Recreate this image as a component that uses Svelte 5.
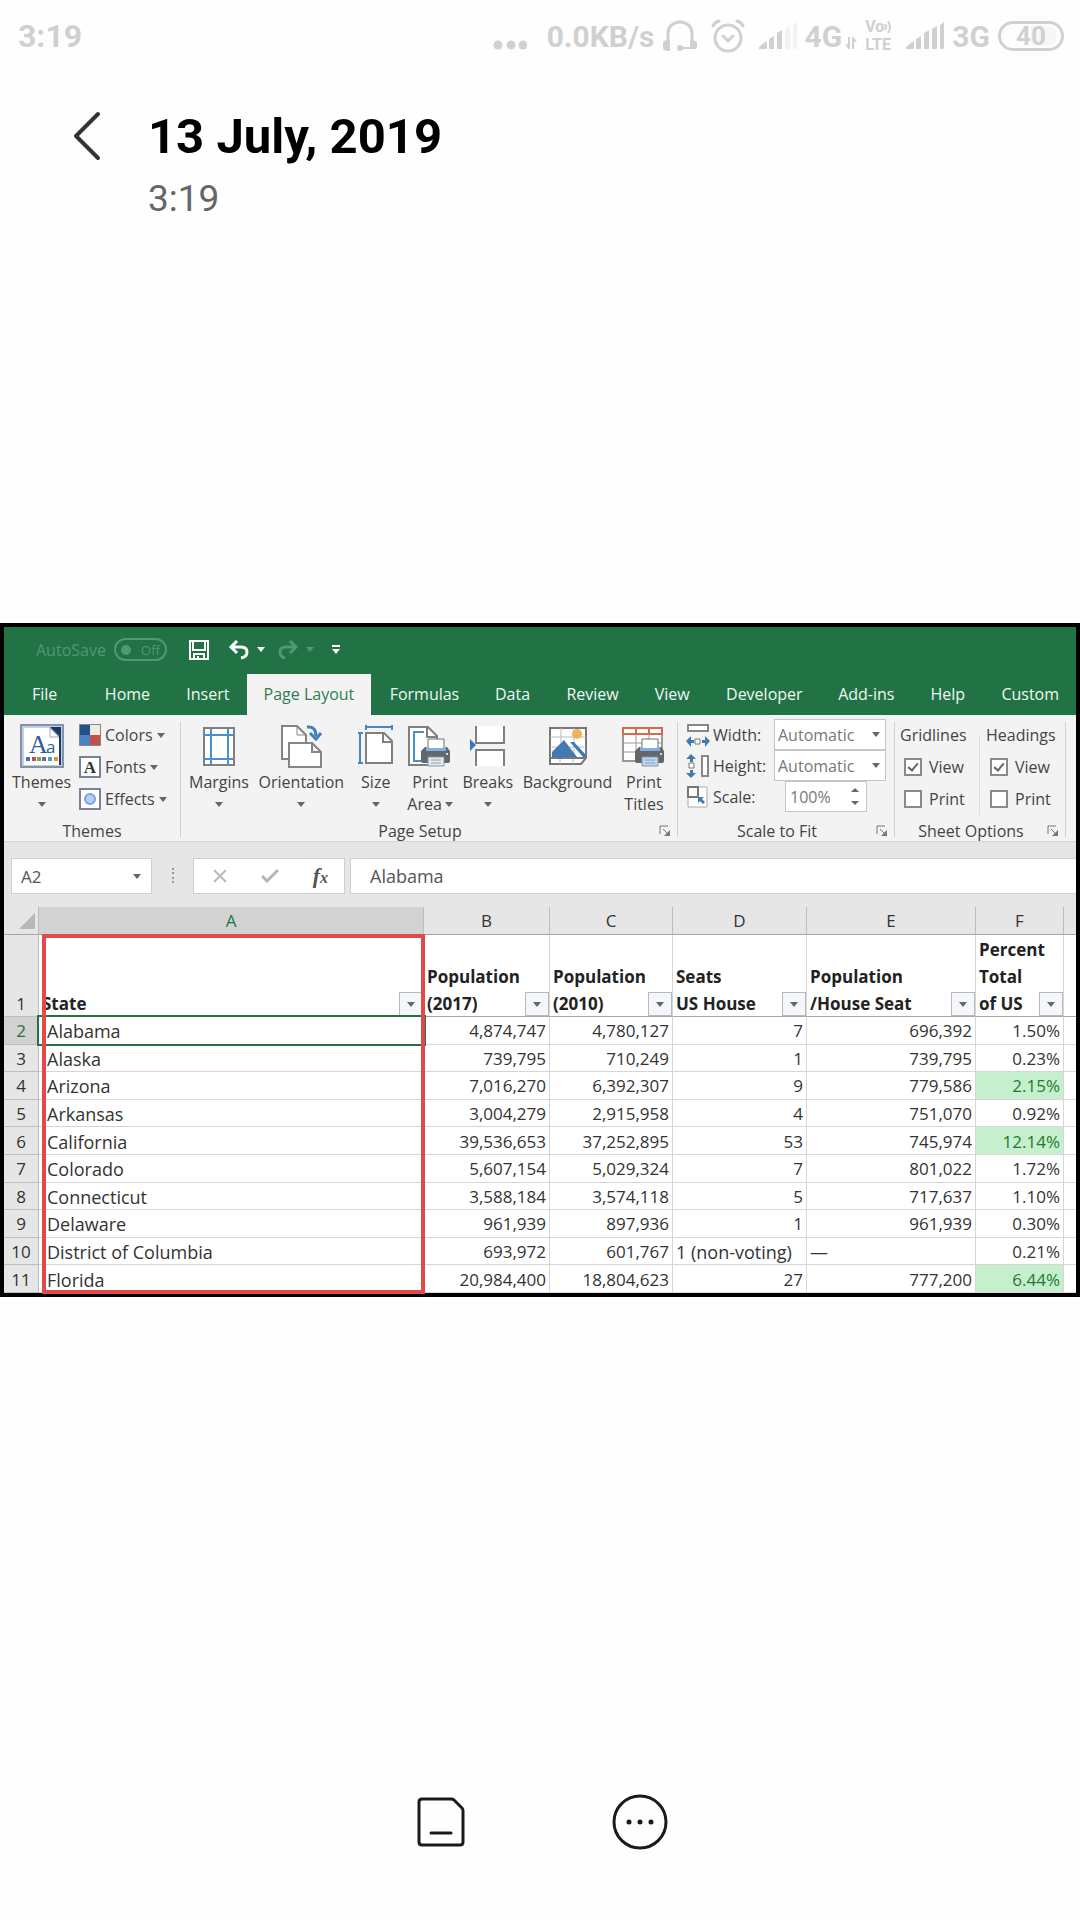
<script lang="ts">
    const tabs = [
        "File", "Home", "Insert", "Page Layout", "Formulas", "Data",
        "Review", "View", "Developer", "Add-ins", "Help", "Custom",
    ];
    let activeTab = $state("Page Layout");

    /* page setup tools, an empty second line shows only the caret */
    const tools = [
        { icon: "margins", label: "Margins", second: "", caret: true },
        { icon: "orientation", label: "Orientation", second: "", caret: true },
        { icon: "size", label: "Size", second: "", caret: true },
        { icon: "area", label: "Print", second: "Area", caret: true },
        { icon: "breaks", label: "Breaks", second: "", caret: true },
        { icon: "background", label: "Background", second: "", caret: false },
        { icon: "titles", label: "Print", second: "Titles", caret: false },
    ];

    const options = [
        { name: "Gridlines", view: true, print: false },
        { name: "Headings", view: true, print: false },
    ];

    const letters = ["A", "B", "C", "D", "E", "F"];
    const headings = [
        ["State"],
        ["Population", "(2017)"],
        ["Population", "(2010)"],
        ["Seats", "US House"],
        ["Population", "/House Seat"],
        ["Percent", "Total", "of US"],
    ];
    const rows = [
        ["Alabama", "4,874,747", "4,780,127", "7", "696,392", "1.50%"],
        ["Alaska", "739,795", "710,249", "1", "739,795", "0.23%"],
        ["Arizona", "7,016,270", "6,392,307", "9", "779,586", "2.15%"],
        ["Arkansas", "3,004,279", "2,915,958", "4", "751,070", "0.92%"],
        ["California", "39,536,653", "37,252,895", "53", "745,974", "12.14%"],
        ["Colorado", "5,607,154", "5,029,324", "7", "801,022", "1.72%"],
        ["Connecticut", "3,588,184", "3,574,118", "5", "717,637", "1.10%"],
        ["Delaware", "961,939", "897,936", "1", "961,939", "0.30%"],
        ["District of Columbia", "693,972", "601,767", "1 (non-voting)", "—", "0.21%"],
        ["Florida", "20,984,400", "18,804,623", "27", "777,200", "6.44%"],
    ];

    /* conditional formatting: anything above 2% is green */
    const isHigh = (value: string) => value.endsWith("%") && parseFloat(value) > 2;
    const isNumber = (value: string) => /^[\d.,]+%?$/.test(value);
</script>

{#snippet caret()}
    <svg class="caret" width="8" height="5" viewBox="0 0 8 5" aria-hidden="true">
        <path d="M0 0h8L4 5z" fill="currentColor" />
    </svg>
{/snippet}

{#snippet signal(full: number)}
    <svg width="39" height="28" viewBox="0 0 39 28" fill="currentColor" aria-hidden="true">
        <path d="M1 27a1 1 0 0 1-1-2l6-5q2-1 2 1v5q0 1-1 1z" />
        <path d="M10 17l5-3v12q0 1-1 1h-3q-1 0-1-1z" />
        <path d="M18 11l5-3v18q0 1-1 1h-3q-1 0-1-1z" />
        <path d="M26 7l5-3v22q0 1-1 1h-3q-1 0-1-1z" opacity={full > 3 ? 1 : 0.25} />
        <path d="M34 3l4-3v26q0 1-1 1h-2q-1 0-1-1z" opacity={full > 3 ? 1 : 0.25} />
    </svg>
{/snippet}

{#snippet printer(tray: string)}
    <g transform="translate(13 15)">
        <path d="M7 0h16v11H7z" fill="#fff" stroke="#707070" />
        <path d="M4 8h22l3 4v10q0 2-2 2H2q-2 0-2-2V12z" fill="#62676d" />
        <path d="M5 8h20v4H5z" fill="#7fb0e0" />
        <path d="M8 2h14v7H8z" fill="#fff" />
        <circle cx="26" cy="15" r="1" fill="#fff" />
        <path d="M7 18h16v9H7z" fill={tray} stroke="#8f9499" />
        <path d="M10 21h10M10 24h10" stroke="#8aa4bd" />
    </g>
{/snippet}

{#snippet launcher(name: string)}
    <button class="launcher" aria-label={name}>
        <svg width="12" height="12" viewBox="0 0 12 12" fill="none" stroke="#777">
            <path d="M1 9V1h8M4 4l5 5" />
            <path d="M11 5v6H5z" fill="#777" stroke="none" />
        </svg>
    </button>
{/snippet}

{#snippet toolIcon(name: string)}
    <svg width="44" height="44" viewBox="0 0 44 44" fill="none" aria-hidden="true">
        {#if name === "margins"}
            <path d="M7 4h30v37H7z" fill="#fff" stroke="#808080" stroke-width="2" />
            <path d="M14 4v37M31 4v37M7 11h30M7 35h30" stroke="#4a90cf" stroke-width="2" />
        {:else if name === "orientation"}
            <path d="M3 2h15l9 9v24H3z" fill="#fff" stroke="#858585" stroke-width="2" />
            <path d="M18 2v9h9" stroke="#858585" />
            <path d="M10 19h23l9 9v15H10z" fill="#fff" stroke="#858585" stroke-width="2" />
            <path d="M33 19v9h9" stroke="#858585" stroke-width="2" />
            <path d="M28 3q9-1 9 9" stroke="#3f7fbf" stroke-width="3" />
            <path d="M31 9l6 6 5-6" stroke="#3f7fbf" stroke-width="3" />
        {:else if name === "size"}
            <path d="M12 9h18l8 8v22H12z" fill="#fff" stroke="#808080" stroke-width="2" />
            <path d="M29 9v9h9" stroke="#808080" stroke-width="2" />
            <path d="M12 3h26M12 1v5M38 1v5M6 9v30M4 9h5M4 39h5" stroke="#4a86c0" stroke-width="2" />
        {:else if name === "area"}
            <path d="M1 3h19l9 9v29H1z" fill="#fff" stroke="#808080" stroke-width="2" />
            <path d="M19 3v10h10" stroke="#808080" stroke-width="2" />
            <path d="M16 8H6v29h9" stroke="#4a90cf" stroke-width="2" />
            {@render printer("#e5e9ee")}
        {:else if name === "breaks"}
            <path d="M10 2h28v17H10zM10 25h28v17H10z" fill="#fff" />
            <path d="M10 2v17h28V2M10 42V26h28v16" stroke="#808080" stroke-width="2" />
            <path d="M4 15l6 6-6 6z" fill="#3a78b8" />
        {:else if name === "background"}
            <path d="M4 4h36v30l-5 6H4z" fill="#fff" stroke="#777" stroke-width="2" />
            <path d="M15 4v28M28 4v28M4 13h36M4 23h36M14 35v5M27 35v5" stroke="#bbb" />
            <path d="M6 33V28l12-12 13 17z" fill="#3f7ab5" />
            <path d="M24 18h4l11 12v3h-2z" fill="#3f7ab5" />
            <circle cx="31" cy="10" r="5" fill="#edb35b" />
            <path d="M4 34h36" stroke="#777" stroke-width="2" />
        {:else}
            <path d="M1 4h39v33H1z" fill="#fff" stroke="#999" stroke-width="2" />
            <path d="M14 10v27M27 10v27M1 19h39M1 28h39" stroke="#999" />
            <path d="M1 4h39v6H1zM14 4v6M27 4v6" fill="#fff" stroke="#d9694d" stroke-width="2" />
            {@render printer("#b9d8f5")}
        {/if}
    </svg>
{/snippet}

<div class="page">
    <header>
        <div class="status">
            <span class="clock">3:19</span>
            <svg width="34" height="10" viewBox="0 0 34 10" fill="currentColor" class="dots" aria-hidden="true">
                <circle cx="5" cy="5" r="4.5" /><circle cx="18" cy="5" r="4.5" /><circle cx="30" cy="5" r="4.5" />
            </svg>
            <span class="speed">0.0KB/s</span>
            <svg class="phones" width="34" height="32" viewBox="0 0 34 32" fill="none" stroke="currentColor" stroke-width="3" aria-hidden="true">
                <path d="M5 22V13a12 11 0 0 1 24 0v9" />
                <path d="M0 23q0-2 4-3h3v11H4q-4-1-4-3zM34 23q0-2-4-3h-3v9h3q4 0 4-2z" fill="currentColor" stroke="none" />
                <path d="M17 28h13" stroke-width="2" />
                <circle cx="17" cy="28" r="3" fill="currentColor" stroke="none" />
            </svg>
            <svg class="alarm" width="34" height="34" viewBox="0 0 34 34" fill="none" stroke="currentColor" stroke-width="3" stroke-linecap="round" aria-hidden="true">
                <circle cx="17" cy="19" r="13" />
                <path d="M2 7q2-4 6-5M32 7q-2-4-6-5M12 17l5 5 5-5" />
            </svg>
            {@render signal(3)}
            <span class="net">4G</span>
            <svg class="arrows" width="12" height="12" viewBox="0 0 12 12" fill="none" stroke="currentColor" stroke-width="2" aria-hidden="true">
                <path d="M4 0v11L1 7M8 12V1l3 4" />
            </svg>
            <span class="volte">
                <span>Vo<svg width="8" height="12" viewBox="0 0 8 12" fill="none" stroke="currentColor" stroke-width="2" aria-hidden="true"><path d="M1 3q2 3 0 6M4 0q4 6 0 12" /></svg></span>
                <span>LTE</span>
            </span>
            {@render signal(5)}
            <span class="net">3G</span>
            <span class="battery"><span>40</span></span>
        </div>
        <div class="title">
            <button class="back" aria-label="Back">
                <svg width="30" height="50" viewBox="0 0 30 50" fill="none" stroke="#333" stroke-width="4" stroke-linecap="round" stroke-linejoin="round">
                    <path d="M25 3L3 25l22 22" />
                </svg>
            </button>
            <div>
                <h1>13 July, 2019</h1>
                <time>3:19</time>
            </div>
        </div>
    </header>

    <main>
        <div class="quick">
            <span class="autosave">AutoSave</span>
            <button class="toggle" aria-label="AutoSave off"><i></i>Off</button>
            <button class="save" aria-label="Save">
                <svg width="20" height="20" viewBox="0 0 20 20" fill="none" stroke="#fff" stroke-width="2">
                    <path d="M1 1h18v18H1zM4 1v9h12V1M5 19v-5h10v5M9 16v3" />
                </svg>
            </button>
            <button class="undo" aria-label="Undo">
                <svg width="22" height="20" viewBox="0 0 22 20" fill="none" stroke="#fff" stroke-width="3">
                    <path d="M9 1L3 7l6 6M3 7h10q6 0 6 5t-6 6" />
                </svg>
                {@render caret()}
            </button>
            <button class="redo" aria-label="Redo">
                <svg width="22" height="20" viewBox="0 0 22 20" fill="none" stroke="currentColor" stroke-width="3">
                    <path d="M13 1l6 6-6 6M19 7H9q-6 0-6 5t5 6" />
                </svg>
                {@render caret()}
            </button>
            <button aria-label="Customize toolbar">
                <svg width="8" height="10" viewBox="0 0 8 10" fill="#fff"><path d="M0 0h8v2H0zM0 4h8L4 9z" /></svg>
            </button>
        </div>

        <nav>
            {#each tabs as tab}
                <button class:active={tab === activeTab} onclick={() => (activeTab = tab)}>{tab}</button>
            {/each}
        </nav>

        <div class="ribbon">
            <section class="themes">
                <div class="body">
                    <button class="tool">
                        <svg width="44" height="44" viewBox="0 0 44 44" aria-hidden="true">
                            <path d="M1 1h42v42H1z" fill="#c3d0e2" stroke="#8593a8" stroke-width="2" />
                            <path d="M4 4h27l10 10v27H4z" fill="#fff" />
                            <path d="M30 3h11v38h-2V12z" fill="#1d3768" />
                            <path d="M30 4l9 9h-9z" fill="#fff" stroke="#9aa8bd" />
                            <text x="9" y="29" font-family="Liberation Serif, serif" font-size="26" fill="#2c5f94">A</text>
                            <text x="26" y="29" font-family="Open Sans, sans-serif" font-size="17" fill="#2c5f94">a</text>
                            <path d="M6 33h4v4H6z" fill="#4472c4" /><path d="M12 33h4v4h-4z" fill="#c0504d" />
                            <path d="M17 33h4v4h-4z" fill="#76a646" /><path d="M22 33h4v4h-4z" fill="#7e5fa6" />
                            <path d="M28 33h4v4h-4z" fill="#45a5c4" /><path d="M34 33h4v4h-4z" fill="#e88d3c" />
                        </svg>
                        <span>Themes</span>
                        <span>{@render caret()}</span>
                    </button>
                    <div class="stack">
                        <button>
                            <svg width="22" height="22" viewBox="0 0 22 22" aria-hidden="true">
                                <path d="M0 0h22v22H0z" fill="#888" /><path d="M1 1h10v10H1z" fill="#24508a" />
                                <path d="M11 1h10v10H11z" fill="#eeece1" /><path d="M1 11h10v10H1z" fill="#4a82c4" />
                                <path d="M11 11h10v10H11z" fill="#c0504d" />
                            </svg>
                            Colors{@render caret()}
                        </button>
                        <button>
                            <svg width="22" height="22" viewBox="0 0 22 22" aria-hidden="true">
                                <path d="M1 1h20v20H1z" fill="#fff" stroke="#77839a" stroke-width="2" />
                                <text x="11" y="17" text-anchor="middle" font-family="Liberation Serif, serif" font-weight="700" font-size="17" fill="#333">A</text>
                            </svg>
                            Fonts{@render caret()}
                        </button>
                        <button>
                            <svg width="22" height="22" viewBox="0 0 22 22" aria-hidden="true">
                                <path d="M1 1h20v20H1z" fill="#fff" stroke="#77839a" stroke-width="2" />
                                <circle cx="11" cy="11" r="5" fill="#b5d0f3" stroke="#7da3dc" stroke-width="2" />
                            </svg>
                            Effects{@render caret()}
                        </button>
                    </div>
                </div>
                <div class="caption"><span>Themes</span></div>
            </section>

            <section class="setup">
                <div class="body">
                    {#each tools as tool}
                        <button class="tool">
                            {@render toolIcon(tool.icon)}
                            <span>{tool.label}</span>
                            <span>{tool.second}{#if tool.caret}{@render caret()}{/if}</span>
                        </button>
                    {/each}
                </div>
                <div class="caption"><span>Page Setup</span>{@render launcher("Page Setup settings")}</div>
            </section>

            <section class="scale">
                <div class="fit">
                    <svg width="24" height="24" viewBox="0 0 24 24" fill="none" aria-hidden="true">
                        <path d="M2 2h20v6H2z" fill="#fff" stroke="#888" stroke-width="2" />
                        <path d="M9 16h5v5H9z" fill="#fff" stroke="#777" />
                        <path d="M0 18l5-5v4h3v3H5v4zM24 18l-5-5v4h-3v3h3v4z" fill="#3f7ab5" />
                    </svg>
                    <label for="fit-width">Width:</label>
                    <div class="select">
                        <select id="fit-width"><option>Automatic</option></select>
                        {@render caret()}
                    </div>
                    <svg width="24" height="24" viewBox="0 0 24 24" fill="none" aria-hidden="true">
                        <path d="M16 2h6v20h-6z" fill="#fff" stroke="#888" stroke-width="2" />
                        <path d="M3 9h5v5H3z" fill="#fff" stroke="#777" />
                        <path d="M5 0l5 5H7v3H4V5H0zM5 24l5-5H7v-3H4v3H0z" fill="#3f7ab5" />
                    </svg>
                    <label for="fit-height">Height:</label>
                    <div class="select">
                        <select id="fit-height"><option>Automatic</option></select>
                        {@render caret()}
                    </div>
                    <svg width="24" height="24" viewBox="0 0 24 24" fill="none" aria-hidden="true">
                        <path d="M2 2h19v20H2z" fill="#fff" stroke="#aaa" />
                        <path d="M2 2h10v10H2z" fill="#fff" stroke="#777" stroke-width="2" />
                        <path d="M12 12h6l-2 2 3 3-2 2-3-3-2 2z" fill="#3f7ab5" />
                    </svg>
                    <label for="fit-scale">Scale:</label>
                    <div class="spin">
                        <input id="fit-scale" type="text" value="100%" />
                        <span>
                            <button aria-label="Increase scale"><svg width="8" height="4" viewBox="0 0 8 4"><path d="M0 4h8L4 0z" fill="#666" /></svg></button>
                            <button aria-label="Decrease scale"><svg width="8" height="4" viewBox="0 0 8 4"><path d="M0 0h8L4 4z" fill="#666" /></svg></button>
                        </span>
                    </div>
                </div>
                <div class="caption"><span>Scale to Fit</span>{@render launcher("Scale settings")}</div>
            </section>

            <section class="options">
                <div class="body">
                    {#each options as option}
                        <fieldset>
                            <legend>{option.name}</legend>
                            <label><input type="checkbox" checked={option.view} />View</label>
                            <label><input type="checkbox" checked={option.print} />Print</label>
                        </fieldset>
                    {/each}
                </div>
                <div class="caption"><span>Sheet Options</span>{@render launcher("Sheet settings")}</div>
            </section>
        </div>

        <div class="formula">
            <div class="namebox">
                <input type="text" value="A2" aria-label="Name box" />
                {@render caret()}
            </div>
            <svg class="grip" width="4" height="16" viewBox="0 0 4 16" fill="#999" aria-hidden="true">
                <path d="M1 0h2v2H1zM1 4h2v2H1zM1 9h2v2H1zM1 13h2v2H1z" />
            </svg>
            <div class="actions">
                <button aria-label="Cancel"><svg width="16" height="16" viewBox="0 0 16 16" fill="none" stroke="#bbb" stroke-width="2"><path d="M2 2l12 12M14 2L2 14" /></svg></button>
                <button aria-label="Enter"><svg width="18" height="16" viewBox="0 0 18 16" fill="none" stroke="#b5b5b5" stroke-width="3"><path d="M1 8l5 5L17 2" /></svg></button>
                <button class="fx" aria-label="Insert function">f<small>x</small></button>
            </div>
            <input class="content" type="text" value="Alabama" aria-label="Formula" />
        </div>

        <div class="grid">
            <table>
                <colgroup>
                    <col class="c-num" /><col /><col class="c-b" /><col class="c-c" />
                    <col class="c-d" /><col class="c-e" /><col class="c-f" /><col class="c-rest" />
                </colgroup>
                <thead>
                    <tr>
                        <th class="corner">
                            <svg width="16" height="16" viewBox="0 0 16 16" aria-hidden="true"><path d="M16 0v16H0z" fill="#b8b8b8" /></svg>
                        </th>
                        {#each letters as letter}
                            <th class:current={letter === "A"}>{letter}</th>
                        {/each}
                        <th></th>
                    </tr>
                </thead>
                <tbody>
                    <tr class="names">
                        <th>1</th>
                        {#each headings as lines}
                            <td>
                                <div>
                                    <span>{#each lines as line, i}{#if i}<br />{/if}{line}{/each}</span>
                                    <button aria-label={"Filter " + lines.join(" ")}>{@render caret()}</button>
                                </div>
                            </td>
                        {/each}
                        <td></td>
                    </tr>
                    {#each rows as row, i}
                        <tr>
                            <th class:current={i === 0}>{i + 2}</th>
                            {#each row as value, j}
                                <td class:number={isNumber(value)} class:high={isHigh(value)} class:selected={i === 0 && j === 0}>{value}</td>
                            {/each}
                            <td></td>
                        </tr>
                    {/each}
                </tbody>
            </table>
            <div class="highlight"></div>
        </div>
    </main>

    <footer>
        <button aria-label="Save note">
            <svg width="56" height="56" viewBox="0 0 56 56" fill="none" stroke="#1a1a1a" stroke-width="3" stroke-linecap="round" stroke-linejoin="round">
                <path d="M8 5h30q2 0 3 1l8 8q1 1 1 3v31q0 3-3 3H9q-3 0-3-3V8q0-3 3-3zM18 39h20" />
            </svg>
        </button>
        <button aria-label="More">
            <svg width="56" height="56" viewBox="0 0 56 56" fill="none" stroke="#1a1a1a" stroke-width="3">
                <circle cx="28" cy="28" r="26" />
                <path d="M17 28h0M28 28h0M39 28h0" stroke-width="5" stroke-linecap="round" />
            </svg>
        </button>
    </footer>
</div>

<style>
    :global(body) {
        background: #fefefe;
    }
    button, input, select {
        font: inherit;
        color: inherit;
        margin: 0;
        padding: 0;
        border: 0;
        border-radius: 0;
        background: none;
        min-width: 0;
    }
    svg {
        display: block;
        flex: none;
    }
    .page {
        min-height: 100vh;
        display: flex;
        flex-direction: column;
        justify-content: space-between;
        font-family: Roboto, sans-serif;
    }
    header {
        height: 240px;
    }
    .status {
        display: flex;
        align-items: center;
        height: 72px;
        padding: 0 16px 0 18px;
        color: #d0d0d0;
        font-size: 30px;
        font-weight: 700;
    }
    .clock {
        font-size: 32px;
        margin-right: auto;
    }
    .dots {
        margin: 18px 20px 0 0;
    }
    .phones {
        margin: 0 14px 0 8px;
    }
    .alarm {
        margin-right: 14px;
    }
    .net {
        margin-left: 7px;
    }
    .arrows {
        margin: 14px 8px 0 3px;
    }
    .volte {
        display: flex;
        flex-direction: column;
        gap: 2px;
        margin-right: 14px;
        font-size: 16px;
        line-height: 16px;
    }
    .volte > span {
        display: flex;
        align-items: center;
    }
    .battery {
        display: flex;
        align-items: center;
        justify-content: center;
        box-sizing: border-box;
        width: 66px;
        height: 30px;
        margin-left: 8px;
        border: 3px solid currentColor;
        border-radius: 15px;
        font-size: 26px;
        background: linear-gradient(to right, transparent 50%, #f7f7f7 50%) content-box;
        padding: 2px 4px;
    }
    .title {
        display: flex;
        padding: 33px 0 0 73px;
    }
    .back {
        height: 50px;
        margin: 6px 45px 0 0;
    }
    h1 {
        margin: 0;
        font-size: 49px;
        line-height: 64px;
        font-weight: 700;
        color: #000;
    }
    time {
        display: block;
        font-size: 37px;
        line-height: 60px;
        color: #666;
    }

    main {
        border: 4px solid #000;
        background: #e6e6e6;
        color: #444;
        font-family: "Open Sans", "Noto Sans", sans-serif;
        font-size: 16px;
    }
    .caret {
        display: inline-block;
        color: #666;
    }
    .quick {
        display: flex;
        align-items: center;
        box-sizing: border-box;
        height: 47px;
        padding: 0 0 2px 32px;
        background: #217346;
        color: #4f9a70;
    }
    .quick .caret {
        color: inherit;
    }
    .quick button {
        display: flex;
        align-items: center;
    }
    .quick .toggle {
        box-sizing: border-box;
        width: 53px;
        height: 23px;
        margin: 0 22px 0 8px;
        padding: 0 5px;
        justify-content: space-between;
        border: 2px solid #4f9a70;
        border-radius: 12px;
        font-size: 13px;
    }
    .toggle i {
        width: 10px;
        height: 10px;
        border-radius: 5px;
        background: currentColor;
    }
    .save {
        margin-right: 19px;
    }
    .undo, .redo {
        gap: 7px;
    }
    .quick .undo {
        color: #fff;
        margin-right: 12px;
    }
    .redo {
        margin-right: 18px;
    }
    nav {
        display: flex;
        height: 41px;
        background: #217346;
        color: #f0f7f3;
    }
    nav button {
        padding: 0 18px 2px 19px;
        white-space: nowrap;
    }
    nav button:first-child {
        padding: 0 29px 2px 28px;
    }
    nav .active {
        padding: 0 18px 2px 17px;
        background: #f3f3f3;
        color: #2f7d52;
    }

    .ribbon {
        display: flex;
        padding: 7px 10px 4px 0;
        background: #f3f3f3;
        border-bottom: 1px solid #d6d6d6;
    }
    section {
        display: flex;
        flex-direction: column;
        justify-content: space-between;
        box-sizing: border-box;
        height: 115px;
        border-right: 1px solid #d0d0d0;
    }
    .themes {
        width: 177px;
    }
    .setup {
        flex: 1;
    }
    .scale {
        width: 217px;
    }
    .options {
        width: 171px;
    }
    .body {
        display: flex;
    }
    .caption {
        display: flex;
        align-items: center;
        height: 12px;
        padding-right: 6px;
    }
    .caption span {
        flex: 1;
        text-align: center;
        line-height: 12px;
    }
    .themes .caption {
        padding: 0;
    }
    .tool {
        display: flex;
        flex-direction: column;
        align-items: center;
        min-width: 44px;
        padding-top: 2px;
        line-height: 22px;
    }
    .tool > :global(svg) {
        margin-bottom: 3px;
    }
    .tool span {
        display: flex;
        align-items: center;
        gap: 3px;
        height: 22px;
    }
    .themes .body {
        padding-left: 8px;
        gap: 8px;
    }
    .setup .body {
        padding: 0 11px 0 8px;
        justify-content: space-between;
    }
    .stack button {
        display: flex;
        align-items: center;
        gap: 4px;
        height: 32px;
    }
    .stack, .fit, .options .body {
        margin-top: -3px;
    }
    .fit {
        display: grid;
        grid-template-columns: 24px 58px 112px;
        grid-auto-rows: 31px;
        column-gap: 3px;
        align-items: center;
        padding-left: 8px;
    }
    .select {
        position: relative;
    }
    .select select {
        appearance: none;
        box-sizing: border-box;
        width: 100%;
        height: 31px;
        padding-left: 3px;
        border: 1px solid #c6c6c6;
        background: #fff;
        color: #777;
    }
    .select .caret {
        position: absolute;
        right: 6px;
        top: 13px;
    }
    .spin {
        display: flex;
        align-items: center;
        justify-content: space-between;
        box-sizing: border-box;
        width: 82px;
        height: 31px;
        margin-left: 11px;
        padding: 0 7px 0 4px;
        border: 1px solid #c6c6c6;
        background: #fff;
        color: #777;
    }
    .spin input {
        width: 48px;
    }
    .spin span {
        display: grid;
        gap: 9px;
    }
    fieldset {
        margin: 0;
        padding: 0;
        border: 0;
        min-width: 0;
    }
    .options .body {
        padding-left: 5px;
    }
    .options fieldset {
        width: 80px;
    }
    .options fieldset + fieldset {
        border-left: 1px solid #dcdcdc;
        padding-left: 6px;
    }
    legend {
        padding: 0;
        line-height: 32px;
    }
    fieldset label {
        display: flex;
        align-items: center;
        gap: 7px;
        height: 32px;
        padding-left: 4px;
    }
    fieldset input {
        appearance: none;
        display: grid;
        place-items: center;
        box-sizing: border-box;
        width: 18px;
        height: 18px;
        border: 2px solid #8a8a8a;
        background: #fff;
    }
    fieldset input:checked::before {
        content: "";
        width: 4px;
        height: 8px;
        margin-bottom: 3px;
        border: solid #666;
        border-width: 0 2px 2px 0;
        rotate: 40deg;
    }

    .formula {
        display: flex;
        align-items: center;
        padding: 16px 0 13px 7px;
        color: #555;
        font-size: 18px;
    }
    .namebox, .actions, .content {
        box-sizing: border-box;
        height: 36px;
        border: 1px solid #cfcfcf;
        background: #fff;
    }
    .namebox {
        display: flex;
        align-items: center;
        width: 141px;
        padding: 0 10px 0 9px;
        font-size: 17px;
    }
    .namebox input {
        flex: 1;
    }
    .grip {
        margin: 0 18px 0 19px;
    }
    .actions {
        display: flex;
        align-items: center;
        justify-content: space-between;
        width: 152px;
        padding: 0 16px 0 18px;
        margin-right: 5px;
    }
    .fx {
        font: italic 700 22px "Liberation Serif", serif;
    }
    .fx small {
        font-size: 16px;
    }
    .content {
        flex: 1;
        padding-left: 19px;
        border-right: 0;
    }

    .grid {
        position: relative;
    }
    table {
        width: 100%;
        height: 386px;
        table-layout: fixed;
        border-collapse: separate;
        border-spacing: 0;
        color: #333;
        font-size: 18px;
        line-height: 24px;
    }
    .c-num { width: 35px; }
    .c-b { width: 126px; }
    .c-c { width: 123px; }
    .c-d { width: 134px; }
    .c-e { width: 169px; }
    .c-f { width: 88px; }
    .c-rest { width: 12px; }
    th, td {
        box-sizing: border-box;
        padding: 2px 3px 0;
        border-right: 1px solid #d6d6d6;
        border-bottom: 1px solid #d6d6d6;
        white-space: nowrap;
    }
    td {
        background: #fff;
    }
    th {
        font-size: 17px;
        font-weight: 400;
        border-color: #bdbdbd;
        background: #e6e6e6;
    }
    td:last-child, th:last-child {
        border-right: 0;
    }
    td:nth-child(2) {
        padding-left: 8px;
    }
    thead th {
        height: 28px;
        padding-top: 0;
        border-bottom-color: #a5a5a5;
    }
    .corner svg {
        margin-left: auto;
    }
    th.current {
        background: #d2d2d2;
        color: #217346;
    }
    .names {
        height: 82px;
    }
    .names th {
        vertical-align: bottom;
    }
    .names td {
        padding: 0;
        vertical-align: bottom;
        border-bottom-color: #a5a5a5;
        color: #222;
        font-size: 17px;
        font-weight: 700;
        line-height: 27px;
    }
    .names div {
        display: flex;
        align-items: flex-end;
        padding-left: 3px;
    }
    .names span {
        flex: 1;
        min-width: 0;
        margin-bottom: -1px;
    }
    .names button {
        display: grid;
        place-items: center;
        flex: none;
        width: 24px;
        height: 24px;
        border: 1px solid #b4bac4;
        background: #f4f6f9;
    }
    .number {
        text-align: right;
        font-size: 17px;
    }
    .high {
        background: #c6efce;
        color: #1f7a2e;
    }
    .selected {
        position: relative;
    }
    .selected::after {
        content: "";
        position: absolute;
        inset: -2px -3px -2px -2px;
        border: 2px solid #217346;
    }
    .highlight {
        position: absolute;
        inset: 27px 651px -1px 38px;
        border: 4px solid #e04a4a;
        pointer-events: none;
    }

    footer {
        display: flex;
        justify-content: center;
        align-items: flex-end;
        gap: 143px;
        box-sizing: border-box;
        height: 240px;
        padding-bottom: 70px;
    }
</style>
